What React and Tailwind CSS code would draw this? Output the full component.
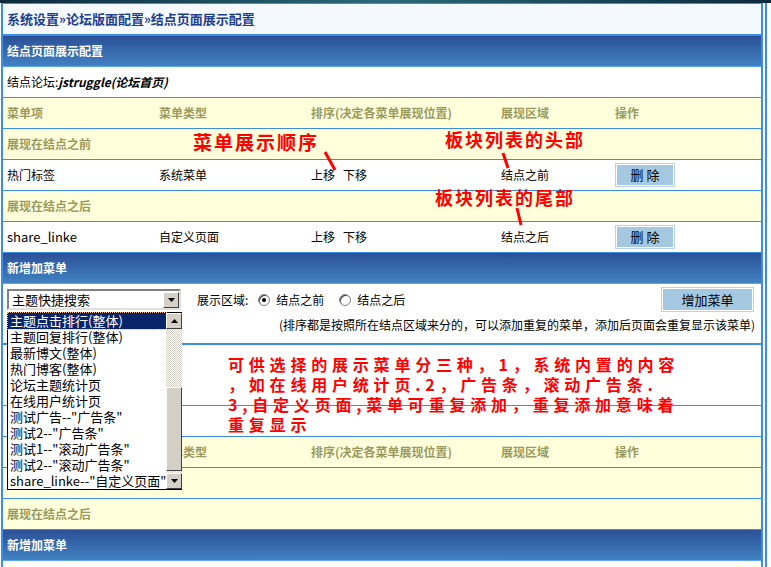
import React from 'react';

const cols = ['w-[152px]', 'w-[152px]', 'w-[190px]', 'w-[114px]', 'flex-1'];

const HeadRow = () => (
  <div className="flex h-[31px] items-center border-b border-[#3a8ee6] bg-[#ffffdc] text-[12px] font-bold text-[#9a9a5e]">
    {['菜单项', '菜单类型', '排序(决定各菜单展现位置)', '展现区域', '操作'].map((t, i) => (
      <div key={i} className={`${cols[i]} pl-[4px]`}>{t}</div>
    ))}
  </div>
);

const GroupRow = ({ text }) => (
  <div className="flex h-[31px] items-center border-b border-[#3a8ee6] bg-[#ffffdc] pl-[4px] text-[12px] font-bold text-[#9a9a5e]">
    {text}
  </div>
);

const BlueBar = ({ text }) => (
  <div className="flex h-[31px] items-center border-b border-[#5aa6f0] bg-gradient-to-b from-[#2c5096] to-[#4182c2] pl-[4px] text-[12px] font-bold text-white">
    {text}
  </div>
);

const DelButton = () => (
  <div className="flex h-[24px] w-[60px] items-center justify-center border border-[#b9d3e6] bg-[#a3c8e0] text-[13px] text-black shadow-[inset_0_0_0_1px_#ffffff]">
    删 除
  </div>
);

const ItemRow = ({ name, type, area, big }) => (
  <div className="flex h-[31px] items-center border-b border-[#3a8ee6] bg-white text-[12px] text-black">
    <div className={`${cols[0]} pl-[4px] ${big ? 'text-[13px]' : ''}`}>{name}</div>
    <div className={`${cols[1]} pl-[4px]`}>{type}</div>
    <div className={`${cols[2]} flex gap-[8px] pl-[4px]`}>
      <span>上移</span>
      <span>下移</span>
    </div>
    <div className={`${cols[3]} pl-[4px]`}>{area}</div>
    <div className={`${cols[4]} pl-[4px]`}>
      <DelButton />
    </div>
  </div>
);

const Radio = ({ checked }) => (
  <span className="flex h-[12px] w-[12px] items-center justify-center rounded-full border border-[#808080] bg-white shadow-[inset_1px_1px_0_#404040]">
    {checked && <span className="h-[4px] w-[4px] rounded-full bg-black" />}
  </span>
);

const options = [
  '主题点击排行(整体)',
  '主题回复排行(整体)',
  '最新博文(整体)',
  '热门博客(整体)',
  '论坛主题统计页',
  '在线用户统计页',
  '测试广告--"广告条"',
  '测试2--"广告条"',
  '测试1--"滚动广告条"',
  '测试2--"滚动广告条"',
  'share_linke--"自定义页面"',
];

const ArrowBtn = ({ up }) => (
  <div className="flex h-[16px] w-[16px] items-center justify-center border border-t-white border-l-white border-r-[#404040] border-b-[#404040] bg-[#d4d0c8]">
    <svg width="7" height="4" viewBox="0 0 7 4">
      {up ? <polygon points="0,4 7,4 3.5,0" fill="#000" /> : <polygon points="0,0 7,0 3.5,4" fill="#000" />}
    </svg>
  </div>
);

export default function App() {
  return (
    <div className="relative h-[567px] w-[771px] overflow-hidden bg-white font-['Noto_Sans_CJK_SC','DejaVu_Sans',sans-serif]">
      <div className="h-[3px] bg-gradient-to-r from-[#0b2a3e] via-[#2b6a7a] to-[#0b2a3e]" />
      <div className="flex">
        <div className="ml-[1px] w-[762px] border-x-2 border-t border-[#3a8ee6]">
          <div className="flex h-[32px] items-center border-b-2 border-[#3a8ee6] bg-[#f4f9ff] pl-[4px] text-[13px] font-bold text-[#1f3f8c]">
            系统设置»论坛版面配置»结点页面展示配置
          </div>
          <BlueBar text="结点页面展示配置" />
          <div className="flex h-[31px] items-center border-b border-[#3a8ee6] bg-white pl-[4px] text-[12px] text-black">
            结点论坛:<span className="font-bold italic">jstruggle(论坛首页)</span>
          </div>
          <HeadRow />
          <GroupRow text="展现在结点之前" />
          <ItemRow name="热门标签" type="系统菜单" area="结点之前" />
          <GroupRow text="展现在结点之后" />
          <ItemRow name="share_linke" type="自定义页面" area="结点之后" big />
          <BlueBar text="新增加菜单" />
          <div className="flex h-[61px] flex-col border-b-2 border-[#3a8ee6] bg-white px-[4px] pt-[3px] text-[12px] text-black">
            <div className="flex items-center">
              <div className="flex h-[21px] w-[174px] items-center border-2 border-t-[#808080] border-l-[#808080] border-r-[#e0e0e0] border-b-[#e0e0e0] bg-white">
                <span className="flex-1 pl-[3px] text-[13px]">主题快捷搜索</span>
                <ArrowBtn />
              </div>
              <span className="ml-[16px]">展示区域:</span>
              <span className="ml-[10px]"><Radio checked /></span>
              <span className="ml-[6px]">结点之前</span>
              <span className="ml-[15px]"><Radio /></span>
              <span className="ml-[6px]">结点之后</span>
              <div className="ml-auto mr-[3px] flex h-[25px] w-[93px] items-center justify-center border border-[#b9d3e6] bg-[#a3c8e0] text-[13px] shadow-[inset_0_0_0_1px_#ffffff]">
                增加菜单
              </div>
            </div>
            <div className="mt-[4px] pr-[2px] text-right">
              (排序都是按照所在结点区域来分的，可以添加重复的菜单，添加后页面会重复显示该菜单)
            </div>
          </div>
          <div className="h-[61px] border-b border-[#3a8ee6] bg-white" />
          <div className="h-[31px] border-b border-[#3a8ee6] bg-white" />
          <HeadRow />
          <div className="h-[31px] border-b border-[#3a8ee6] bg-[#ffffdc]" />
          <GroupRow text="展现在结点之后" />
          <BlueBar text="新增加菜单" />
        </div>
        <div className="ml-[2px] h-[564px] w-[2px] bg-[#3a8ee6]" />
      </div>

      {/* dropdown list */}
      <div className="absolute left-[7px] top-[312px] flex h-[178px] w-[175px] border border-black bg-white text-[13px] text-black">
        <div className="flex-1">
          {options.map((o, i) => (
            <div
              key={i}
              className={`h-[16px] whitespace-nowrap pl-[2px] leading-[16px] ${i === 0 ? 'bg-[#0a246a] text-white outline-1 outline-dotted outline-[#f0c070]' : ''}`}
            >
              {o}
            </div>
          ))}
        </div>
        <div className="flex w-[16px] flex-col bg-[repeating-conic-gradient(#d4d0c8_0_25%,#ffffff_0_50%)] bg-[length:2px_2px]">
          <ArrowBtn up />
          <div className="h-[58px]" />
          <div className="h-[84px] border border-t-white border-l-white border-r-[#404040] border-b-[#404040] bg-[#d4d0c8]" />
          <div className="flex-1" />
          <ArrowBtn />
        </div>
      </div>

      {/* red annotations */}
      <div className="absolute left-[193px] top-[130px] text-[19px] font-bold leading-[24px] tracking-[2px] text-[#ff0000]">菜单展示顺序</div>
      <div className="absolute left-[445px] top-[127px] text-[18px] font-bold leading-[24px] tracking-[2px] text-[#ff0000]">板块列表的头部</div>
      <div className="absolute left-[435px] top-[185px] text-[18px] font-bold leading-[24px] tracking-[2px] text-[#ff0000]">板块列表的尾部</div>
      <svg className="pointer-events-none absolute left-0 top-0" width="771" height="567">
        <line x1="325" y1="152" x2="335" y2="170" stroke="#ff0000" strokeWidth="3" />
        <line x1="503" y1="153" x2="508" y2="168" stroke="#ff0000" strokeWidth="3" />
        <line x1="517" y1="208" x2="521" y2="225" stroke="#ff0000" strokeWidth="3" />
      </svg>
      <div className="absolute left-[228px] top-[354px] text-[16px] font-bold leading-[20px] tracking-[4.8px] text-[#ff0000]">
        <div>可供选择的展示菜单分三种，1，系统内置的内容</div>
        <div>，如在线用户统计页.2，广告条，滚动广告条.</div>
        <div>3,自定义页面,菜单可重复添加，重复添加意味着</div>
        <div>重复显示</div>
      </div>
    </div>
  );
}
